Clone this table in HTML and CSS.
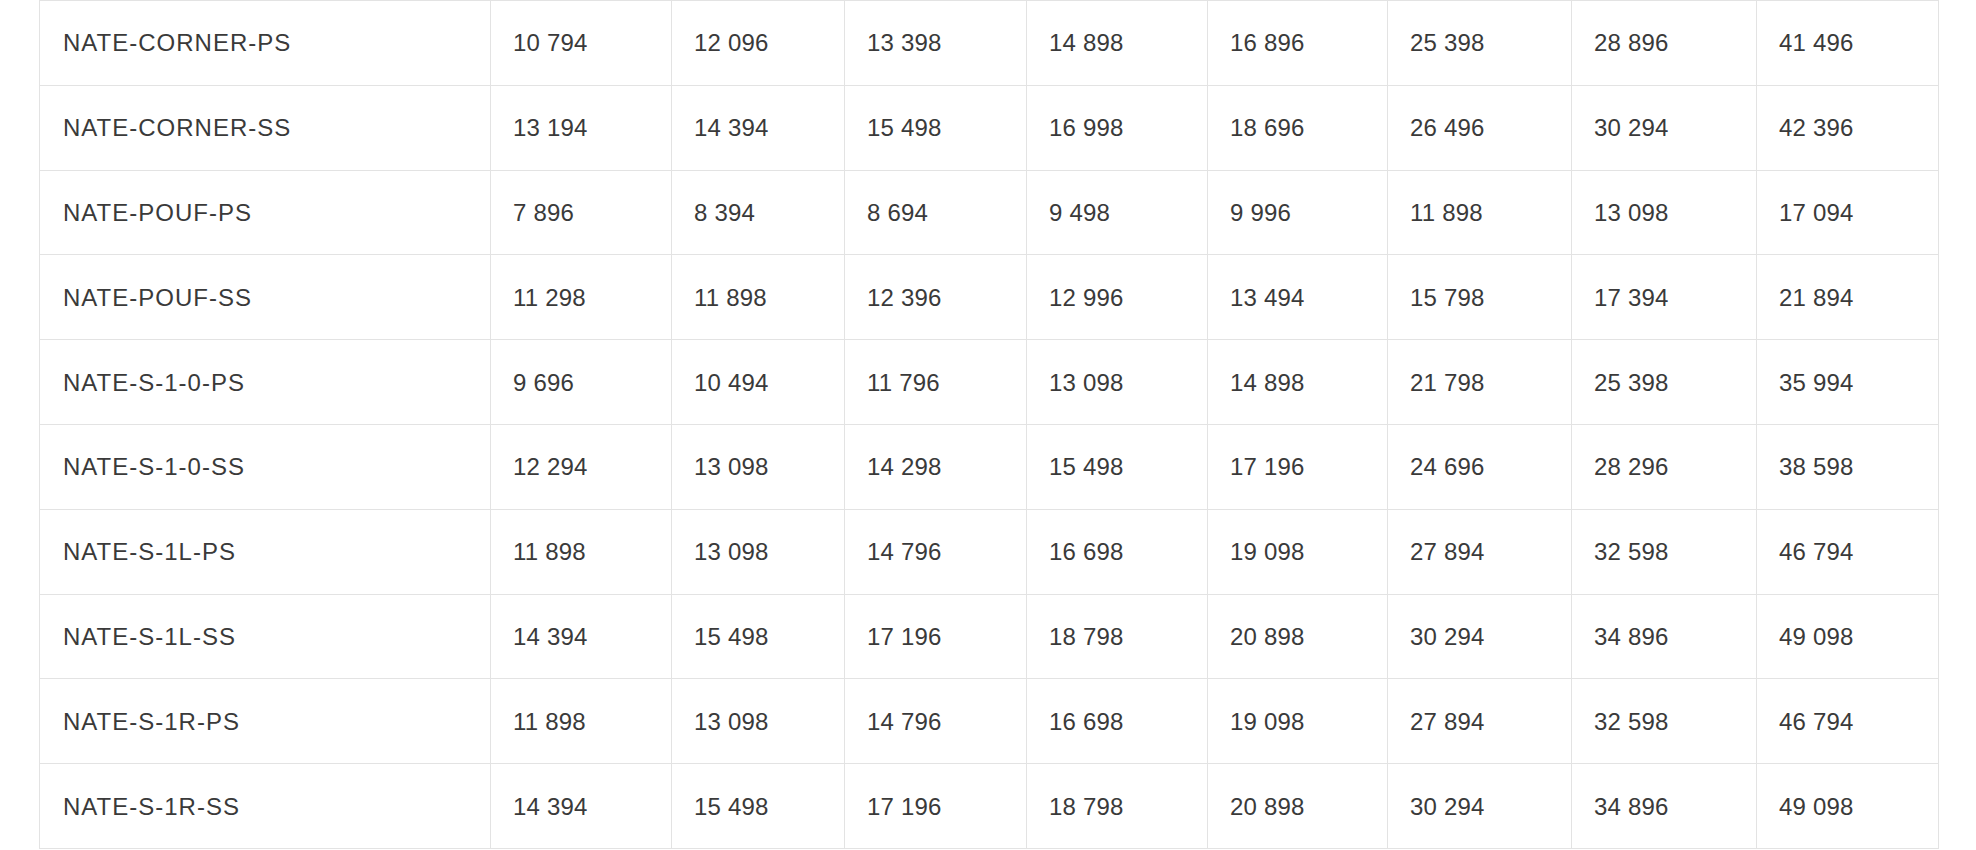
FILE: index.html
```html
<!DOCTYPE html>
<html lang="ru">
<head>
<meta charset="utf-8">
<title>Prices</title>
<link rel="stylesheet" href="styles.css">
</head>
<body>
<table class="price-table">
  <colgroup>
    <col class="c-name"><col class="c1"><col class="c2"><col class="c3"><col class="c4"><col class="c5"><col class="c6"><col class="c7"><col class="c8">
  </colgroup>
  <tbody>
    <tr><td class="name">NATE-CORNER-PS</td><td>10 794</td><td>12 096</td><td>13 398</td><td>14 898</td><td>16 896</td><td>25 398</td><td>28 896</td><td>41 496</td></tr>
    <tr><td class="name">NATE-CORNER-SS</td><td>13 194</td><td>14 394</td><td>15 498</td><td>16 998</td><td>18 696</td><td>26 496</td><td>30 294</td><td>42 396</td></tr>
    <tr><td class="name">NATE-POUF-PS</td><td>7 896</td><td>8 394</td><td>8 694</td><td>9 498</td><td>9 996</td><td>11 898</td><td>13 098</td><td>17 094</td></tr>
    <tr><td class="name">NATE-POUF-SS</td><td>11 298</td><td>11 898</td><td>12 396</td><td>12 996</td><td>13 494</td><td>15 798</td><td>17 394</td><td>21 894</td></tr>
    <tr><td class="name">NATE-S-1-0-PS</td><td>9 696</td><td>10 494</td><td>11 796</td><td>13 098</td><td>14 898</td><td>21 798</td><td>25 398</td><td>35 994</td></tr>
    <tr><td class="name">NATE-S-1-0-SS</td><td>12 294</td><td>13 098</td><td>14 298</td><td>15 498</td><td>17 196</td><td>24 696</td><td>28 296</td><td>38 598</td></tr>
    <tr><td class="name">NATE-S-1L-PS</td><td>11 898</td><td>13 098</td><td>14 796</td><td>16 698</td><td>19 098</td><td>27 894</td><td>32 598</td><td>46 794</td></tr>
    <tr><td class="name">NATE-S-1L-SS</td><td>14 394</td><td>15 498</td><td>17 196</td><td>18 798</td><td>20 898</td><td>30 294</td><td>34 896</td><td>49 098</td></tr>
    <tr><td class="name">NATE-S-1R-PS</td><td>11 898</td><td>13 098</td><td>14 796</td><td>16 698</td><td>19 098</td><td>27 894</td><td>32 598</td><td>46 794</td></tr>
    <tr><td class="name">NATE-S-1R-SS</td><td>14 394</td><td>15 498</td><td>17 196</td><td>18 798</td><td>20 898</td><td>30 294</td><td>34 896</td><td>49 098</td></tr>
  </tbody>
</table>
</body>
</html>
```

FILE: styles.css
```css
html, body {
  margin: 0;
  padding: 0;
  background: #ffffff;
}

body {
  font-family: "Liberation Sans", Arial, sans-serif;
  color: #3a3a3a;
  overflow: hidden;
}

.price-table {
  margin-left: 39px;
  width: 1899px;
  table-layout: fixed;
  border-collapse: collapse;
}

.price-table td {
  border: 1px solid #e3e3e3;
  height: 84.8px;
  padding: 1px 0 0 22px;
  font-size: 24px;
  font-weight: 400;
  line-height: 1;
  letter-spacing: 0.2px;
  vertical-align: middle;
  white-space: nowrap;
  box-sizing: border-box;
}

.price-table td.name {
  padding-left: 23px;
  letter-spacing: 1px;
}

.c-name { width: 451px; }
.c1 { width: 181px; }
.c2 { width: 173px; }
.c3 { width: 182px; }
.c4 { width: 181px; }
.c5 { width: 180px; }
.c6 { width: 184px; }
.c7 { width: 185px; }
.c8 { width: 182px; }
```
